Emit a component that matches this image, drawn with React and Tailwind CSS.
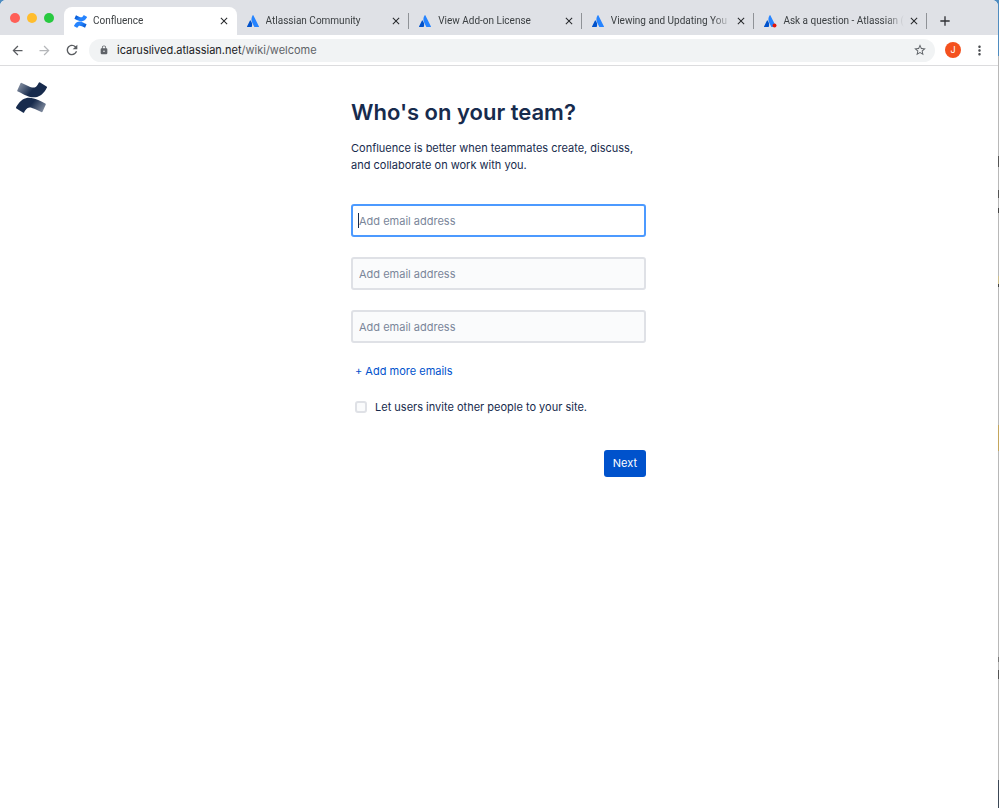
import React, { useState } from 'react';
import {
    MdAdd,
    MdArrowBack,
    MdArrowForward,
    MdClose,
    MdLock,
    MdMoreVert,
    MdRefresh,
    MdStarBorder
} from 'react-icons/md';

const TABS = [
    { title: 'Confluence', icon: 'confluence' },
    { title: 'Atlassian Community', icon: 'atlassian' },
    { title: 'View Add-on License', icon: 'atlassian' },
    { title: 'Viewing and Updating You', icon: 'atlassian' },
    { title: 'Ask a question - Atlassian (', icon: 'atlassian', badge: true }
];

const ConfluenceLogo = ({ id, dark, light, className }) => (
    <svg viewBox="0 0 24 24" className={className} aria-hidden="true">
        <defs>
            <linearGradient id={`${id}-top`} x1="0" y1="0.2" x2="1" y2="0.6">
                <stop offset="0" stopColor={light} />
                <stop offset="0.55" stopColor={dark} />
            </linearGradient>
            <linearGradient id={`${id}-bottom`} x1="1" y1="0.8" x2="0" y2="0.4">
                <stop offset="0" stopColor={light} />
                <stop offset="0.55" stopColor={dark} />
            </linearGradient>
        </defs>
        <path
            fill={`url(#${id}-bottom)`}
            d="M.87 18.257c-.248.382-.53.875-.763 1.245a.764.764 0 0 0 .255 1.04l4.965 3.054a.764.764 0 0 0 1.058-.26c.199-.332.454-.763.733-1.221 1.967-3.247 3.945-2.853 7.508-1.146l4.957 2.337a.764.764 0 0 0 1.028-.382l2.364-5.346a.764.764 0 0 0-.382-1 599.851 599.851 0 0 1-4.965-2.361C10.911 10.97 5.224 11.185.87 18.257z"
        />
        <path
            fill={`url(#${id}-top)`}
            d="M23.131 5.743c.249-.405.531-.875.764-1.25a.764.764 0 0 0-.256-1.034L18.675.404a.764.764 0 0 0-1.058.26c-.195.335-.451.763-.734 1.225-1.966 3.246-3.945 2.85-7.508 1.146L4.437.694a.764.764 0 0 0-1.027.382L1.046 6.422a.764.764 0 0 0 .382 1c1.039.49 3.105 1.467 4.965 2.361 6.698 3.246 12.392 3.029 16.738-4.04z"
        />
    </svg>
);

const AtlassianLogo = ({ badge }) => (
    <svg viewBox="0 0 24 24" className="size-3 shrink-0 overflow-visible" aria-hidden="true">
        <path
            fill="#0052cc"
            d="M7.12 11.084a.683.683 0 0 0-1.16.126L.075 22.974a.703.703 0 0 0 .63 1.018h8.19a.678.678 0 0 0 .63-.39c1.767-3.65.696-9.203-2.406-12.52z"
        />
        <path
            fill="#2684ff"
            d="M11.434.386a15.515 15.515 0 0 0-.906 15.317l3.95 7.9a.703.703 0 0 0 .628.388h8.19a.703.703 0 0 0 .63-1.017L12.63.38a.664.664 0 0 0-1.196.006z"
        />
        {badge && <circle cx="21" cy="21" r="4" fill="#e3170a" />}
    </svg>
);

const Tab = ({ tab, active, divider }) => (
    <div
        className={`relative flex min-w-0 flex-1 items-center pl-[9px] pr-[7px] ${
            active ? 'rounded-t-lg bg-white' : ''
        }`}
    >
        <div className="flex w-[14px] shrink-0 justify-center">
            {tab.icon === 'confluence' ? (
                <ConfluenceLogo id="favicon" dark="#2684ff" light="#0052cc" className="size-[13px]" />
            ) : (
                <AtlassianLogo badge={tab.badge} />
            )}
        </div>
        <span className="ml-[6px] min-w-0 flex-1 overflow-hidden whitespace-nowrap font-['Roboto','Liberation_Sans',sans-serif] text-[10px] leading-4 text-[#3c4043] [mask-image:linear-gradient(to_right,#000_calc(100%_-_18px),transparent)]">
            {tab.title}
        </span>
        <button type="button" aria-label={`Close ${tab.title}`} className="ml-1 text-[#26282b]">
            <MdClose className="size-3" />
        </button>
        {divider && <span className="absolute right-0 top-[6px] h-4 w-px bg-[#8f9297]" />}
    </div>
);

const TabStrip = () => (
    <div className="flex h-[35px] rounded-t-md bg-[#dfe1e6] pt-[7px]">
        <div className="flex w-16 shrink-0 items-center gap-[7px] pb-[6px] pl-[10px]">
            <span className="size-[10px] rounded-full bg-[#ff5f57]" />
            <span className="size-[10px] rounded-full bg-[#ffbd2e]" />
            <span className="size-[10px] rounded-full bg-[#28c940]" />
        </div>
        <div className="flex min-w-0 flex-1">
            {TABS.map((tab, index) => (
                <Tab key={tab.title} tab={tab} active={index === 0} divider={index > 0} />
            ))}
        </div>
        <div className="flex w-[71px] shrink-0 items-center pl-[10px]">
            <button type="button" aria-label="New tab" className="text-[#303236]">
                <MdAdd className="size-4" />
            </button>
        </div>
    </div>
);

const Toolbar = () => (
    <div className="flex h-[31px] items-center border-b border-[#dcdcde] pl-[10px] pr-[11px]">
        <div className="flex items-center gap-3 text-[#5a5d61]">
            <button type="button" aria-label="Back"><MdArrowBack className="size-[15px]" /></button>
            <button type="button" aria-label="Forward" className="text-[#b5b7ba]"><MdArrowForward className="size-[15px]" /></button>
            <button type="button" aria-label="Reload"><MdRefresh className="size-4" /></button>
        </div>
        <div className="ml-[9px] flex h-[23px] flex-1 items-center rounded-full bg-[#f1f3f4] pl-[10px] pr-2 text-[#5f6368]">
            <MdLock className="size-[10px]" />
            <p className="ml-2 flex-1 text-[11px] leading-4">
                <span className="text-[#202124]">icaruslived.atlassian.net</span>/wiki/welcome
            </p>
            <button type="button" aria-label="Bookmark this page"><MdStarBorder className="size-[14px]" /></button>
        </div>
        <button type="button" aria-label="Profile" className="ml-[10px] size-4 rounded-full bg-[#f4511e] text-[9px] leading-4 text-white">
            J
        </button>
        <button type="button" aria-label="Menu" className="ml-[11px] text-[#4a4d51]">
            <MdMoreVert className="size-[15px]" />
        </button>
    </div>
);

const EmailField = ({ value, onChange, focused, label }) => (
    <div className="relative">
        <input
            type="email"
            aria-label={label}
            value={value}
            onChange={onChange}
            placeholder="Add email address"
            className={`block h-[33px] w-full rounded-[3px] border-2 px-[6px] text-[11px] text-[#172b4d] outline-none placeholder:text-[#7a869a] ${
                focused ? 'border-[#4c9aff] bg-white' : 'border-[#dfe1e6] bg-[#fafbfc]'
            }`}
        />
        {focused && !value && <span className="absolute left-[7px] top-[9px] h-[15px] w-px bg-[#172b4d]" />}
    </div>
);

const TeamForm = () => {
    const [emails, setEmails] = useState(['', '', '']);
    const [letInvite, setLetInvite] = useState(false);

    const updateEmail = (index, value) => {
        setEmails(prev => prev.map((email, i) => (i === index ? value : email)));
    };

    return (
        <form className="w-full max-w-[295px] text-[11px] text-[#172b4d]" onSubmit={(e) => e.preventDefault()}>
            <h1 className="whitespace-nowrap text-[22px] font-semibold leading-8">Who's on your team?</h1>
            <p className="mt-3 whitespace-nowrap leading-[17px]">
                Confluence is better when teammates create, discuss,
                <br />
                and collaborate on work with you.
            </p>
            <div className="mt-[30px] space-y-5">
                {emails.map((email, index) => (
                    <EmailField
                        key={index}
                        label={`Email address ${index + 1}`}
                        value={email}
                        focused={index === 0}
                        onChange={(e) => updateEmail(index, e.target.value)}
                    />
                ))}
            </div>
            <button
                type="button"
                onClick={() => setEmails(prev => [...prev, ''])}
                className="ml-1 mt-5 block leading-4 text-[#0052cc]"
            >
                + Add more emails
            </button>
            <label className="ml-1 mt-5 flex items-center gap-2 leading-4">
                <input
                    type="checkbox"
                    checked={letInvite}
                    onChange={(e) => setLetInvite(e.target.checked)}
                    className="size-3 appearance-none rounded-[3px] border-2 border-[#dfe1e6] bg-[#fafbfc] checked:border-[#0052cc] checked:bg-[#0052cc]"
                />
                Let users invite other people to your site.
            </label>
            <div className="mt-[35px] flex justify-end">
                <button type="submit" className="h-[27px] rounded-[3px] bg-[#0052cc] px-[9px] text-white">
                    Next
                </button>
            </div>
        </form>
    );
};

export default function App() {
    return (
        <div className="flex min-h-screen bg-[#4f8cc0] font-['Inter','Liberation_Sans',sans-serif]">
            <div className="flex min-w-0 flex-1 flex-col rounded-t-md bg-white">
                <TabStrip />
                <Toolbar />
                <main className="relative flex flex-1 justify-center pl-4 pr-[17px] pt-[30px]">
                    <a href="#home" aria-label="Confluence" className="absolute left-4 top-4">
                        <ConfluenceLogo id="brand" dark="#172b4d" light="#8a94a6" className="size-[31px]" />
                    </a>
                    <TeamForm />
                </main>
            </div>
            {/* sliver of the desktop behind the window */}
            <div className="w-px bg-[linear-gradient(#4f8cc0_56px,#b8b8b8_56px,#b8b8b8_156px,#555_156px,#555_167px,#b8b8b8_167px,#b8b8b8_190px,#555_190px,#555_198px,#b8b8b8_198px,#b8b8b8_208px,#444_208px,#444_213px,#b8b8b8_213px,#b8b8b8_276px,#cdbf8d_276px,#cdbf8d_284px,#444_284px,#444_287px,#b8b8b8_287px,#b8b8b8_425px,#c4a65c_425px,#c4a65c_451px,#b8b8b8_451px,#b8b8b8_657px,#777_657px,#777_662px,#b8b8b8_662px,#b8b8b8_670px,#555_670px,#555_679px,#b8b8b8_679px,#b8b8b8_780px,#3c4856_780px)]" />
        </div>
    );
}
